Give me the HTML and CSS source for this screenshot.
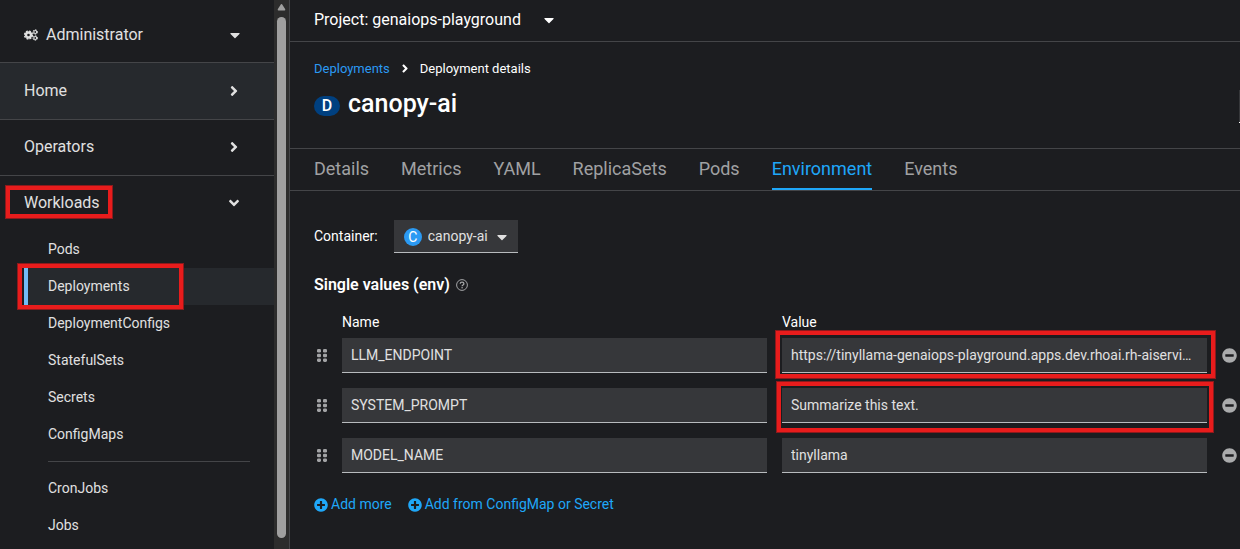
FILE: index.html
```html
<!DOCTYPE html>
<html lang="en">
<head>
<meta charset="utf-8">
<meta name="viewport" content="width=device-width, initial-scale=1">
<title>canopy-ai · Deployment details</title>
<link rel="stylesheet" href="styles.css">
</head>
<body>
<svg class="sprite" aria-hidden="true">
  <symbol id="caret" viewBox="0 0 320 512"><path d="M31.300 192h257.300c17.800 0 26.700 21.500 14.100 34.100L174.100 354.800c-7.800 7.800-20.500 7.800-28.300 0L17.200 226.100C4.600 213.500 13.500 192 31.300 192z"/></symbol>
  <symbol id="angle" viewBox="0 0 256 512"><path d="M224.300 273l-136 136c-9.400 9.400-24.600 9.400-33.900 0l-22.600-22.600c-9.400-9.400-9.400-24.600 0-33.900l96.400-96.400-96.400-96.400c-9.400-9.400-9.400-24.600 0-33.900L54.300 103c9.400-9.400 24.600-9.400 33.900 0l136 136c9.500 9.400 9.500 24.600.1 34z"/></symbol>
  <symbol id="plus" viewBox="0 0 512 512"><path d="M256 8C119 8 8 119 8 256s111 248 248 248 248-111 248-248S393 8 256 8zm144 276c0 6.600-5.400 12-12 12h-92v92c0 6.600-5.400 12-12 12h-56c-6.600 0-12-5.400-12-12v-92h-92c-6.600 0-12-5.400-12-12v-56c0-6.600 5.400-12 12-12h92v-92c0-6.600 5.400-12 12-12h56c6.600 0 12 5.400 12 12v92h92c6.600 0 12 5.400 12 12v56z"/></symbol>
  <symbol id="minus" viewBox="0 0 512 512"><path d="M256 8C119 8 8 119 8 256s111 248 248 248 248-111 248-248S393 8 256 8zM124 296c-6.600 0-12-5.400-12-12v-56c0-6.600 5.400-12 12-12h264c6.600 0 12 5.400 12 12v56c0 6.600-5.400 12-12 12H124z"/></symbol>
  <symbol id="grip" viewBox="0 0 10 13"><rect x="0" y="0" width="4" height="3.500" rx="1.300"/><rect x="6" y="0" width="4" height="3.500" rx="1.300"/><rect x="0" y="4.700" width="4" height="3.500" rx="1.300"/><rect x="6" y="4.700" width="4" height="3.500" rx="1.300"/><rect x="0" y="9.400" width="4" height="3.500" rx="1.300"/><rect x="6" y="9.400" width="4" height="3.500" rx="1.300"/></symbol>
  <symbol id="cogs" viewBox="0 0 28 24">
    <g fill="none" stroke="currentColor">
      <circle cx="9" cy="12" r="5" stroke-width="4.800"/>
      <circle cx="9" cy="12" r="8" stroke-width="2.600" stroke-dasharray="4 2.283"/>
      <circle cx="22.500" cy="6" r="2.900" stroke-width="2.200"/>
      <circle cx="22.500" cy="6" r="4.600" stroke-width="1.800" stroke-dasharray="2.800 2.017"/>
      <circle cx="22.500" cy="18" r="2.900" stroke-width="2.200"/>
      <circle cx="22.500" cy="18" r="4.600" stroke-width="1.800" stroke-dasharray="2.800 2.017"/>
    </g>
  </symbol>
</svg>

<div class="console">
  <aside class="sidebar">
    <nav class="nav" aria-label="Main">
      <button class="perspective" type="button">
        <svg class="icon-cogs"><use href="#cogs"/></svg>
        <span>Administrator</span>
        <svg class="icon-caret push"><use href="#caret"/></svg>
      </button>
      <button class="section hovered" type="button"><span>Home</span><svg class="icon-angle push"><use href="#angle"/></svg></button>
      <button class="section" type="button"><span>Operators</span><svg class="icon-angle push"><use href="#angle"/></svg></button>
      <button class="section open" type="button" aria-expanded="true"><span class="marked marked-section">Workloads</span><svg class="icon-angle push down"><use href="#angle"/></svg></button>
      <ul class="links">
        <li><a href="#">Pods</a></li>
        <li class="marked marked-link"><a class="current" href="#" aria-current="page">Deployments</a></li>
        <li><a href="#">DeploymentConfigs</a></li>
        <li><a href="#">StatefulSets</a></li>
        <li><a href="#">Secrets</a></li>
        <li><a href="#">ConfigMaps</a></li>
        <li class="divider" role="separator"></li>
        <li><a href="#">CronJobs</a></li>
        <li><a href="#">Jobs</a></li>
      </ul>
    </nav>
    <div class="scrollbar" aria-hidden="true">
      <svg class="scroll-arrow" viewBox="0 0 9 8"><path d="M4.500 0Q5.200 0 5.700 1L8.800 6Q9 7.500 8 7.500H1Q0 7.500 .2 6L3.300 1Q3.800 0 4.500 0z"/></svg>
      <div class="thumb"></div>
    </div>
  </aside>

  <main class="main">
    <div class="project-bar">
      <label class="project">
        <select class="bare-select" aria-label="Project"><option>Project: genaiops-playground</option></select>
        <svg class="icon-caret"><use href="#caret"/></svg>
      </label>
    </div>

    <header class="page-head">
      <nav class="crumbs" aria-label="Breadcrumb">
        <a href="#">Deployments</a>
        <svg class="icon-crumb"><use href="#angle"/></svg>
        <span>Deployment details</span>
      </nav>
      <div class="title-row">
        <span class="badge badge-deployment">D</span>
        <h1>canopy-ai</h1>
        <button class="actions" type="button" aria-label="Actions"></button>
      </div>
    </header>

    <nav class="tabs" aria-label="Deployment">
      <a href="#">Details</a>
      <a href="#">Metrics</a>
      <a href="#">YAML</a>
      <a href="#">ReplicaSets</a>
      <a href="#">Pods</a>
      <a class="active" href="#" aria-current="page">Environment</a>
      <a href="#">Events</a>
    </nav>

    <section class="environment">
      <div class="container-row">
        <label for="container">Container:</label>
        <div class="picker">
          <span class="badge badge-container">C</span>
          <select class="bare-select" id="container"><option>canopy-ai</option></select>
          <svg class="icon-caret"><use href="#caret"/></svg>
        </div>
      </div>

      <h2>Single values (env)
        <svg class="icon-help" viewBox="0 0 12 12" role="img" aria-label="Help"><circle cx="6" cy="6" r="5.400" fill="none" stroke="currentColor"/><path d="M4.200 4.800C4.200 2.500 7.900 2.600 7.900 4.700 7.900 6 6.100 5.900 6.100 7.200" fill="none" stroke="currentColor" stroke-width="1.300"/><circle cx="6.100" cy="8.800" r=".8" fill="currentColor"/></svg>
      </h2>

      <div class="pairs">
        <span class="head head-name" id="name-head">Name</span>
        <span class="head" id="value-head">Value</span>

        <button class="grip" type="button" aria-label="Drag to reorder"><svg><use href="#grip"/></svg></button>
        <input type="text" aria-labelledby="name-head" value="LLM_ENDPOINT">
        <div class="marked marked-endpoint"><input type="text" aria-labelledby="value-head" value="https://tinyllama-genaiops-playground.apps.dev.rhoai.rh-aiservi…"></div>
        <button class="remove" type="button" aria-label="Delete"><svg><use href="#minus"/></svg></button>

        <button class="grip" type="button" aria-label="Drag to reorder"><svg><use href="#grip"/></svg></button>
        <input type="text" aria-labelledby="name-head" value="SYSTEM_PROMPT">
        <div class="marked marked-prompt"><input type="text" aria-labelledby="value-head" value="Summarize this text."></div>
        <button class="remove" type="button" aria-label="Delete"><svg><use href="#minus"/></svg></button>

        <button class="grip" type="button" aria-label="Drag to reorder"><svg><use href="#grip"/></svg></button>
        <input type="text" aria-labelledby="name-head" value="MODEL_NAME">
        <input type="text" aria-labelledby="value-head" value="tinyllama">
        <button class="remove" type="button" aria-label="Delete"><svg><use href="#minus"/></svg></button>
      </div>

      <div class="add-row">
        <button type="button"><svg><use href="#plus"/></svg>Add more</button>
        <button type="button"><svg><use href="#plus"/></svg>Add from ConfigMap or Secret</button>
      </div>
    </section>
  </main>
</div>
</body>
</html>
```

FILE: styles.css
```css
:root {
  --bg: #1c1d20;
  --raised: #26292d;
  --field: #36373a;
  --line: #444548;
  --text: #e0e0e0;
  --link: #1fa7f8;
  --mark: #e81c1c;
}

* { box-sizing: border-box; }

body {
  margin: 0;
  background: var(--bg);
  color: #fff;
  font: 14px/21px Roboto, "Noto Sans", sans-serif;
}

button, input, select { font: inherit; color: inherit; }
button { padding: 0; border: 0; background: none; text-align: left; cursor: pointer; }
a { text-decoration: none; color: inherit; }
svg { display: block; flex: none; fill: currentColor; }
.sprite { position: absolute; width: 0; height: 0; }

.console { display: flex; height: 100vh; overflow: hidden; }

/* Sidebar */
.sidebar { display: flex; flex: none; width: 290px; border-right: 1px solid var(--line); }
.nav { flex: 1; overflow: hidden; color: var(--text); }
.perspective, .section {
  display: flex;
  align-items: center;
  width: 100%;
  padding: 16px 32px 16px 24px;
  font-size: 16px;
  line-height: 24px;
  border-bottom: 1px solid var(--line);
}
.perspective { gap: 8px; padding-top: 23px; padding-bottom: 15px; }
.section.hovered { background: var(--raised); }
.section + .section { padding-top: 15px; }
.section.open { border-bottom: 0; }
.push { margin-left: auto; }
.icon-cogs { width: 14px; height: 12px; }
.icon-caret { width: 14px; height: 16px; }
.icon-angle { width: 16px; height: 16px; }
.icon-angle.down { transform: rotate(90deg); }

.links { list-style: none; margin: 0; padding: 0 0 0 24px; }
.links a { display: block; padding: 8px 24px; }
.links .current { padding-left: 20px; border-left: 4px solid #73bcf7; background: var(--raised); }
.links .divider { margin: 8px 24px; height: 1px; background: var(--line); }

.scrollbar { display: flex; flex-direction: column; align-items: center; gap: 6px; width: 15px; padding: 4px 0 11px; background: #2c2c2c; color: #9f9f9f; }
.scroll-arrow { width: 9px; height: 7px; }
.thumb { flex: 1; width: 9px; border-radius: 5px; background: #9f9f9f; }

/* Page header */
.main { flex: 1; min-width: 0; }
.bare-select { appearance: none; border: 0; padding: 0; background: transparent; outline: 0; }
.project-bar { padding: 8px 24px 9px; border-bottom: 1px solid var(--line); font-size: 16px; line-height: 24px; }
.project { display: inline-flex; align-items: center; gap: 20px; }
.project .icon-caret { width: 16px; }

.page-head { padding: 16px 0 24px 24px; }
.crumbs { display: flex; align-items: center; gap: 10px; font-size: 13px; }
.crumbs a { color: #2b9af3; }
.icon-crumb { width: 10px; height: 13px; }
.title-row { display: flex; align-items: center; gap: 8px; margin-top: 9px; }
h1 { margin: 0; padding-bottom: 4px; font-size: 25px; line-height: 32px; font-weight: 500; }
.badge { flex: none; text-align: center; color: #fff; }
.badge-deployment { width: 26px; border-radius: 20px; background: #004080; font-size: 16px; line-height: 20px; font-weight: 500; }
.actions { margin-left: auto; width: 1px; height: 33px; background: var(--field); border-bottom: 1px solid #fff; }

.tabs { display: flex; gap: 32px; padding: 0 24px; border: solid var(--line); border-width: 1px 0; font-size: 18px; line-height: 27px; color: #a0a1a3; }
.tabs a { padding: 6px 0; border-bottom: 2px solid transparent; }
.tabs .active { color: var(--link); border-color: var(--link); }

/* Environment form */
.environment { padding: 29px 0 24px 24px; }
.container-row { display: flex; align-items: center; gap: 16px; }
.picker { display: flex; align-items: center; gap: 6px; padding: 6px 8px 5px 10px; background: var(--field); border-bottom: 1px solid #b8bbbe; color: var(--text); }
.picker .icon-caret { width: 16px; }
.badge-container { width: 18px; border-radius: 9px; background: #2b9af3; line-height: 18px; }

h2 { display: flex; align-items: center; gap: 6px; margin: 20px 0 15px; font-size: 16px; line-height: 24px; font-weight: 600; }
.icon-help { width: 12px; height: 12px; color: #a3a4a6; }

.pairs { display: grid; grid-template-columns: 13px minmax(0, 1fr) minmax(0, 1fr) 18px; gap: 15px; align-items: center; }
.head { margin-bottom: -10px; }
.head-name { grid-column: 2; }
.head + .head { grid-column: 3 / 5; }
.pairs input { display: block; width: 100%; min-width: 0; padding: 7px 8px 6px 9px; border: 0; border-bottom: 1px solid #b8bbbe; border-radius: 0; outline: 0; background: var(--field); color: var(--text); line-height: 21px; text-overflow: ellipsis; }
.grip { justify-self: end; color: #a3a4a6; }
.grip svg { width: 10px; height: 13px; }
.remove { color: #aaabac; }
.remove svg { width: 15px; height: 15px; }

.add-row { display: flex; gap: 16px; margin-top: 21px; color: var(--link); }
.add-row button { display: flex; align-items: center; gap: 3px; }
.add-row svg { width: 14px; height: 14px; }

/* Highlight frames drawn over the controls */
.marked { position: relative; }
.marked::after { content: ""; position: absolute; border: 4px solid var(--mark); box-shadow: 0 0 0 1px #8c1a1c; pointer-events: none; }
.marked-section::after { inset: -5px -12px -3px -18px; }
.marked-link::after { inset: -4px 91px -4px -6px; }
.marked-endpoint::after { inset: -7px -8px -5px -6px; }
.marked-prompt::after { inset: -6px -6px -9px -5px; }
```
